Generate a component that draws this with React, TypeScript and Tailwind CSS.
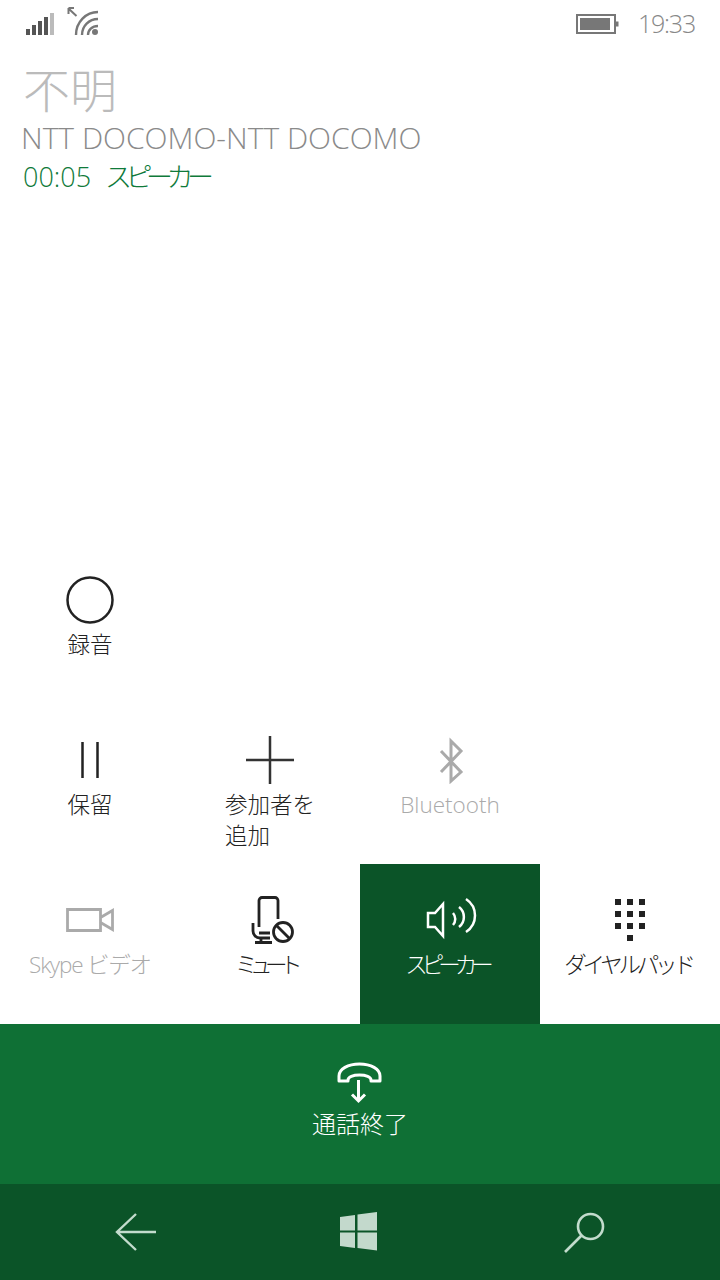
const font = "font-['Open_Sans','Noto_Sans_CJK_JP',sans-serif]";

function StatusLeft() {
  return (
    <svg aria-hidden="true" width="80" height="36" viewBox="0 0 80 36" fill="none">
      <rect x="0" y="23" width="4" height="6" fill="#555" />
      <rect x="6" y="19" width="4" height="10" fill="#555" />
      <rect x="12" y="15" width="4" height="14" fill="#555" />
      <rect x="18" y="11" width="4" height="18" fill="#555" />
      <rect x="24" y="7" width="4" height="22" fill="#bbb" />
      <path d="M43.500 3h-1v5M42.500 2h5.500M43 3l7.500 7" stroke="#777" strokeWidth="2" />
      <path
        d="M50 29c0-13 10-23 22-23M56 29c0-9 7-16 16-16M62 29c0-5 4-9 10-9"
        stroke="#777"
        strokeWidth="2.400"
      />
      <circle cx="69" cy="26" r="3" fill="#777" />
    </svg>
  );
}

function BatteryIcon() {
  return (
    <svg aria-hidden="true" width="43" height="20" viewBox="0 0 43 20" fill="none">
      <rect x="1" y="1" width="38" height="18" stroke="#777" strokeWidth="2" />
      <rect x="4" y="4" width="30" height="12" fill="#777" />
      <rect x="40" y="7.500" width="2.500" height="5" fill="#777" />
    </svg>
  );
}

function RecordIcon() {
  return (
    <svg aria-hidden="true" width="48" height="48" viewBox="0 0 48 48" fill="none">
      <circle cx="24" cy="24" r="22.500" stroke="#222" strokeWidth="2.500" />
    </svg>
  );
}

function PauseIcon() {
  return (
    <svg aria-hidden="true" width="48" height="48" viewBox="0 0 48 48" fill="none">
      <path d="M16.500 6v36M31.500 6v36" stroke="#222" strokeWidth="2.500" />
    </svg>
  );
}

function PlusIcon() {
  return (
    <svg aria-hidden="true" width="48" height="48" viewBox="0 0 48 48" fill="none">
      <path d="M24 0v48M0 24h48" stroke="#333" strokeWidth="2.500" />
    </svg>
  );
}

function BluetoothIcon() {
  return (
    <svg aria-hidden="true" width="48" height="48" viewBox="0 0 48 48" fill="none">
      <path d="M15 15l20 21-10 9V5l10 10-20 21" stroke="#aaa" strokeWidth="3" />
    </svg>
  );
}

function VideoIcon() {
  return (
    <svg aria-hidden="true" width="48" height="48" viewBox="0 0 48 48" fill="none">
      <path d="M1.500 13.500h33v21h-33zM34.500 21.500l12-7v19l-12-7" stroke="#aaa" strokeWidth="2.800" />
    </svg>
  );
}

function MuteIcon() {
  return (
    <svg aria-hidden="true" width="48" height="48" viewBox="0 0 48 48" fill="none">
      <path
        d="M13 31V4.500a3 3 0 0 1 3-3h13a3 3 0 0 1 3 3V23M13 37h11"
        stroke="#222"
        strokeWidth="2.800"
      />
      <path d="M7 27v8a7 7 0 0 0 7 7h10M15 42v4.500M9 46.500h17" stroke="#222" strokeWidth="2.800" />
      <circle cx="37" cy="36" r="9.500" stroke="#222" strokeWidth="2.800" />
      <path d="M30.500 29.500l13 13" stroke="#222" strokeWidth="2.800" />
    </svg>
  );
}

function SpeakerIcon() {
  return (
    <svg aria-hidden="true" className="overflow-visible" width="48" height="48" viewBox="0 0 48 48" fill="none">
      <path d="M2 17h7l8-9v32l-8-9H2z" stroke="#fff" strokeWidth="2.500" />
      <path
        d="M27 17c3 3.500 3 8.500 0 12M33 11c6.500 5 6.500 15 0 20M40 3c12 8 12 25 0 33"
        stroke="#fff"
        strokeWidth="2.500"
      />
    </svg>
  );
}

function DialpadIcon() {
  const rows = [3, 15, 27];
  const cols = [9, 21, 33];
  return (
    <svg aria-hidden="true" width="48" height="48" viewBox="0 0 48 48" fill="#222">
      {rows.map((y) => cols.map((x) => <rect key={`${x}-${y}`} x={x} y={y} width="6" height="6" />))}
      <rect x="21" y="39" width="6" height="6" />
    </svg>
  );
}

function HangupIcon() {
  return (
    <svg aria-hidden="true" width="48" height="48" viewBox="0 0 48 48" fill="none">
      <path
        d="M3 25v-5c0-7 9-12 20.500-12S44 13 44 20v5h-9v-1c0-3-5-5-11.500-5S12 21 12 24v1z"
        stroke="#fff"
        strokeWidth="3"
        strokeLinejoin="round"
      />
      <path d="M22.500 24v21M16 38.500l6.500 6.500 6.500-6.500" stroke="#fff" strokeWidth="3" />
    </svg>
  );
}

function BackIcon() {
  return (
    <svg aria-hidden="true" width="44" height="40" viewBox="-1 0 44 40" fill="none">
      <path d="M22 2L3 20l19 18M3 20h39" stroke="#c3dccd" strokeWidth="2.400" />
    </svg>
  );
}

function WindowsIcon() {
  return (
    <svg aria-hidden="true" width="40" height="40" viewBox="1 0 40 40" fill="#c3d9cc">
      <path d="M1 5l15-2v15.500H1zM18.500 2.500L38 0v18.500H18.500zM1 20.500h15V36L1 34zM18.500 20.500H38V38.500l-19.500-2.500z" />
    </svg>
  );
}

function SearchIcon() {
  return (
    <svg aria-hidden="true" width="44" height="44" viewBox="0 0 44 44" fill="none">
      <circle cx="27.500" cy="16.500" r="12.500" stroke="#c3dccd" strokeWidth="2.600" />
      <path d="M18.500 25.500L2 42" stroke="#c3dccd" strokeWidth="2.600" />
    </svg>
  );
}

function Action({
  icon,
  label,
  color = "text-[#222]",
  bg = "",
  tracking = "",
}: {
  icon: React.ReactNode;
  label: React.ReactNode;
  color?: string;
  bg?: string;
  tracking?: string;
}) {
  return (
    <div className={`flex h-[160px] flex-col items-center pt-[32px] ${bg}`}>
      <div className="h-[48px] w-[48px]">{icon}</div>
      <div className={`mt-[5px] w-fit text-[22.5px] leading-[31px] font-light whitespace-nowrap ${color} ${tracking}`}>
        {label}
      </div>
    </div>
  );
}

export default function App() {
  return (
    <div className={`flex h-[1280px] w-[720px] flex-col overflow-hidden bg-white ${font}`}>
      <div className="flex h-[63px] shrink-0 items-start justify-between">
        <div className="pt-[6px] pl-[26px]">
          <StatusLeft />
        </div>
        <div className="flex items-center gap-[19px] pt-[5px] pr-[25px]">
          <div className="pt-[2px]">
            <BatteryIcon />
          </div>
          <span className="text-[25px] leading-[36px] font-light tracking-[-1.200px] text-[#888]">19:33</span>
        </div>
      </div>

      <div className="pl-[23px]">
        <div className="text-[47px] leading-[54px] font-light text-[#bbb]">不明</div>
        <div className="-ml-[2px] text-[30px] leading-[41px] font-light text-[#8a8a8a]">NTT DOCOMO-NTT DOCOMO</div>
        <div className="flex gap-[14px] text-[27px] leading-[38px] font-light text-[#0f7a3a]">
          <span>00:05</span>
          <span className="tracking-[-6.500px]">スピーカー</span>
        </div>
      </div>

      <div className="flex-1" />

      <div className="grid shrink-0 grid-cols-4">
        <Action icon={<RecordIcon />} label="録音" />
        <div className="col-span-3" />
        <Action icon={<PauseIcon />} label="保留" />
        <Action
          icon={<PlusIcon />}
          label={
            <>
              参加者を
              <br />
              追加
            </>
          }
        />
        <Action icon={<BluetoothIcon />} label="Bluetooth" color="text-[#aaa]" />
        <div />
        <Action icon={<VideoIcon />} label="Skype ビデオ" color="text-[#aaa]" tracking="tracking-[-1.200px]" />
        <Action icon={<MuteIcon />} label="ミュート" tracking="tracking-[-7.500px] pr-[10px]" />
        <Action
          icon={<SpeakerIcon />}
          label="スピーカー"
          color="text-white"
          bg="bg-[#0b5428]"
          tracking="tracking-[-6px] pr-[7px]"
        />
        <Action icon={<DialpadIcon />} label="ダイヤルパッド" tracking="tracking-[-4.200px] pr-[4px]" />
      </div>

      <div className="flex h-[160px] shrink-0 flex-col items-center bg-[#0f7035] pt-[32px]">
        <div className="h-[48px] w-[48px]">
          <HangupIcon />
        </div>
        <div className="mt-[4px] text-[24px] leading-[31px] font-light text-white">通話終了</div>
      </div>

      <div className="flex h-[96px] shrink-0 items-center justify-between bg-[#0b5428] px-[113px]">
        <BackIcon />
        <WindowsIcon />
        <SearchIcon />
      </div>
    </div>
  );
}
